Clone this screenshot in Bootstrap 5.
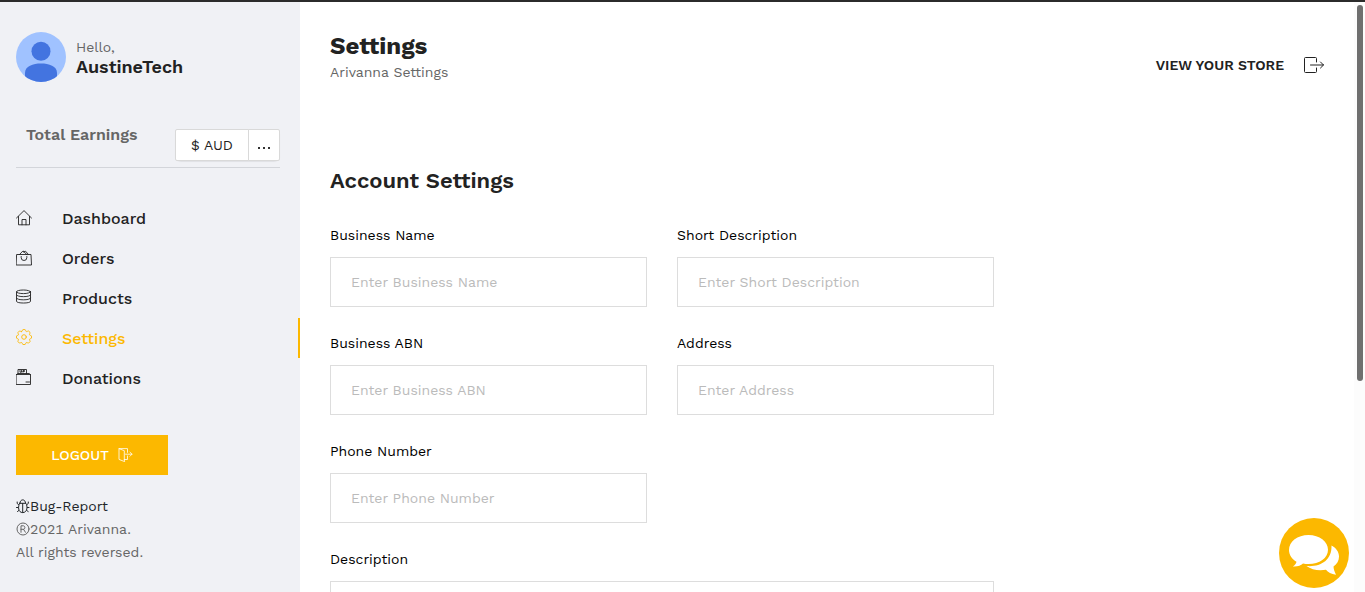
<!DOCTYPE html>
<html lang="en">
<head>
<meta charset="utf-8">
<meta name="viewport" content="width=device-width, initial-scale=1">
<title>Arivanna Settings</title>
<link href="https://cdn.jsdelivr.net/npm/bootstrap@5.3.0/dist/css/bootstrap.min.css" rel="stylesheet">
<style>
  :root { --brand: #fcb800; --ink: #222; --muted: #666; }
  body { font-family: "Work Sans", Inter, "Liberation Sans", sans-serif; font-size: 14px; line-height: 24px; color: var(--ink); background: #fff; }
  a { color: inherit; text-decoration: none; }
  svg { display: block; flex: none; }
  .line-icon { fill: none; stroke: currentColor; stroke-width: 1; stroke-linecap: round; stroke-linejoin: round; }
  .shell { border-top: 2px solid #2b2b2b; }
  .side { width: 300px; background: #f0f1f5; padding: 30px 0 0 16px; }
  .side-inner { margin-right: 20px; }
  .muted { color: var(--muted); }
  .who { gap: 10px; }
  .hello { line-height: 18px; }
  .user-name { font-size: 18px; line-height: 21px; font-weight: 600; }
  .earnings { margin-top: 41px; padding-bottom: 6px; border-bottom: 1px solid #d3d5da; }
  .earnings h2 { font-size: 16px; line-height: 24px; font-weight: 600; padding-left: 10px; }
  .money { box-shadow: 0 1px 1px #0001; margin-top: 6px; }
  .money .btn { --bs-btn-border-color: #d9d9d9; --bs-btn-bg: #fff; --bs-btn-border-radius: 2px; --bs-btn-color: #222; height: 32px; padding: 0; font-size: 14px; line-height: 30px; }
  .money .btn:first-child { width: 74px; }
  .money .btn:last-child { width: 32px; }
  .menu { margin-top: 30px; }
  .menu .nav-link { display: flex; align-items: center; gap: 30px; height: 40px; padding: 2px 0 0; font-size: 16px; font-weight: 500; color: var(--ink); border-right: 2px solid transparent; }
  .menu .nav-link.active { color: var(--brand); border-color: var(--brand); }
  .menu svg { margin-bottom: 2px; stroke-width: .9; }
  .btn-logout { --bs-btn-bg: var(--brand); --bs-btn-color: #fff; --bs-btn-border-color: var(--brand); --bs-btn-border-radius: 0; width: 152px; height: 40px; margin-top: 37px; font-size: 14px; font-weight: 500; gap: 9px; }
  .btn-logout svg { stroke-width: .8; }
  .legal { margin-top: 20px; line-height: 23px; font-variant-numeric: tabular-nums; }
  .legal svg { margin-bottom: 2px; }
  .main-pane { padding: 31px 30px 0; }
  h1 { font-size: 24px; line-height: 27px; font-weight: 700; margin: 0; }
  .store-link { font-size: 14px; font-weight: 600; gap: 20px; margin-top: 20px; }
  .account { max-width: 664px; margin-top: 82px; }
  .account h2 { font-size: 22px; line-height: 30px; font-weight: 600; margin-bottom: 27px; }
  .account .row { --bs-gutter-x: 30px; --bs-gutter-y: 24px; }
  .account .form-label { display: block; color: #000; margin-bottom: 10px; }
  .account .form-control { height: 50px; border: 1px solid #ddd; border-radius: 0; padding: 0 20px; font-size: 14px; background: #fff; }
  .account textarea.form-control { height: 120px; }
  .account .form-control::placeholder { color: #bbb; }
  .rail { width: 11px; background: #fcfcfc; padding: 3px 2px 0 3px; }
  .rail-thumb { height: 64%; background: #6f6f6f; border-radius: 3px; }
  .chat { right: 16px; bottom: 4px; width: 70px; height: 70px; background: var(--brand); }
</style>
</head>
<body>
<div class="shell d-flex vh-100 overflow-hidden">
  <aside class="side flex-shrink-0">
    <div class="side-inner">
      <div class="who d-flex align-items-center">
        <svg width="50" height="50" viewBox="0 0 50 50" aria-hidden="true"><defs><clipPath id="face"><circle cx="25" cy="25" r="25"/></clipPath></defs><g clip-path="url(#face)"><path fill="#a0c2ff" d="M0 0h50v50H0z"/><circle cx="25" cy="19.300" r="9.500" fill="#4374e0"/><path fill="#4374e0" d="M9 50V41C9 34 17 31.500 25 31.500S41 34 41 41v9z"/></g></svg>
        <div>
          <div class="hello muted">Hello,</div>
          <div class="user-name">AustineTech</div>
        </div>
      </div>
      <div class="earnings d-flex justify-content-between align-items-end">
        <h2 class="muted align-self-start mb-0">Total Earnings</h2>
        <div class="money btn-group">
          <button type="button" class="btn">$ AUD</button>
          <button type="button" class="btn" aria-label="More">
            <svg class="mx-auto mt-1" width="14" height="4" viewBox="0 0 14 4" fill="#333"><path d="M1 2h2v2H1zM6 2h2v2H6zM11 2h2v2h-2z"/></svg>
          </button>
        </div>
      </div>
    </div>
    <nav class="menu nav flex-column">
      <a class="nav-link" href="#"><svg class="line-icon" width="16" height="16" viewBox="0 0 16 16"><path d="M.5 8 8 .6 15.500 8M2.500 6.500v8.300h11V6.500M6 14.800V9.500h4v5.300"/></svg>Dashboard</a>
      <a class="nav-link" href="#"><svg class="line-icon" width="16" height="16" viewBox="0 0 16 16"><path d="M1 4.500h14l.5 10.500H.5zM3.500 4.500 7 .9l3.800 3.600M7.500 2l2-.8 3 3.300M5.200 6.500v1.200a2.800 2.800 0 0 0 5.600 0V6.500"/></svg>Orders</a>
      <a class="nav-link" href="#"><svg class="line-icon mb-1" width="16" height="16" viewBox="0 0 16 16"><ellipse cx="7.500" cy="2.800" rx="7" ry="1.800"/><path d="M.5 2.800v9.500c0 2.300 14 2.300 14 0V2.800M.5 6c0 2.300 14 2.300 14 0M.5 9.200c0 2.300 14 2.300 14 0"/></svg>Products</a>
      <a class="nav-link active" href="#" aria-current="page"><svg class="line-icon mb-1" width="16" height="16" viewBox="0 0 16 16"><circle cx="8" cy="8" r="2.300"/><path d="M5.700 2.600C6.400 2.300 6.300.6 7 .6h2c.7 0 .6 1.700 1.300 2s1.800-1 2.400-.5l1.300 1.300c.5.600-.8 1.700-.5 2.400s2 .6 2 1.300v1.900c0 .7-1.700.6-2 1.300s1 1.800.5 2.400l-1.300 1.300c-.6.500-1.700-.8-2.400-.5S9.700 15.500 9 15.500H7c-.7 0-.6-1.700-1.300-2s-1.800 1-2.400.5L2 12.700c-.5-.6.8-1.700.5-2.400S.5 9.700.5 9V7.100c0-.7 1.700-.6 2-1.300S1.500 4 2 3.400l1.300-1.300c.6-.5 1.700.8 2.400.5z"/></svg>Settings</a>
      <a class="nav-link" href="#"><svg class="line-icon mb-1" width="16" height="16" viewBox="0 0 16 16"><path d="M2 4.500v-4h8.500v4M.5 5.500h14v10H.5zM.5 5.500l1.500-1h11.200l1.300 1M10 13h3.500M4 1.500v1.700h1.500V1.500M7 3.200V1.500h1.500v1H7"/></svg>Donations</a>
    </nav>
    <button type="button" class="btn btn-logout d-flex align-items-center justify-content-center">LOGOUT
      <svg class="line-icon" width="15" height="14" viewBox="0 0 15 14"><path d="M6.300 11.500V2.700L1 .6v10.800l5.300 2.100zM1 .6h8.500v3.800M6.300 11.500h3.200V8M7.500 6.200H14M12 4.200l2 2-2 2"/></svg>
    </button>
    <div class="legal muted">
      <a href="#" class="d-flex align-items-center text-dark"><svg class="line-icon" width="14" height="16" viewBox="0 0 14 16"><path d="M3.700 5.300h6.200c2 3 1.500 9.300-3.200 9.300S1.700 8.300 3.700 5.300zM4 5C4 .7 9.500.7 9.500 5M6.700 5.500v9M2.500 6.500 1.200 5.500V4M2.200 9.500H.5M2.800 12.500l-1.300 1M11 6.500l1.300-1V4M11.200 9.500H13M10.700 12.500l1.500 1"/></svg>Bug-Report</a>
      <div class="d-flex align-items-center"><svg class="line-icon" width="14" height="14" viewBox="0 0 14 14"><circle cx="7" cy="7" r="6"/><path d="M5 10.300V3.800h2.500a1.800 1.800 0 0 1 0 3.500H5M7.500 7.300l2 3"/></svg>2021 Arivanna.</div>
      <div>All rights reversed.</div>
    </div>
  </aside>
  <main class="main-pane flex-grow-1 overflow-hidden">
    <header class="d-flex justify-content-between align-items-start">
      <div>
        <h1>Settings</h1>
        <div class="muted">Arivanna Settings</div>
      </div>
      <a href="#" class="store-link d-flex align-items-center">VIEW YOUR STORE
        <svg class="line-icon" width="20" height="16" viewBox="0 0 20 16"><path d="M12.500 5V1.500a1 1 0 0 0-1-1H1.500a1 1 0 0 0-1 1v13a1 1 0 0 0 1 1h10a1 1 0 0 0 1-1V11M6.500 8h13M16.500 5l3 3-3 3"/></svg>
      </a>
    </header>
    <form class="account">
      <h2>Account Settings</h2>
      <div class="row">
        <div class="col-6"><label class="form-label" for="bn">Business Name</label><input class="form-control" id="bn" type="text" placeholder="Enter Business Name"></div>
        <div class="col-6"><label class="form-label" for="sd">Short Description</label><input class="form-control" id="sd" type="text" placeholder="Enter Short Description"></div>
        <div class="col-6"><label class="form-label" for="abn">Business ABN</label><input class="form-control" id="abn" type="text" placeholder="Enter Business ABN"></div>
        <div class="col-6"><label class="form-label" for="ad">Address</label><input class="form-control" id="ad" type="text" placeholder="Enter Address"></div>
        <div class="col-6"><label class="form-label" for="ph">Phone Number</label><input class="form-control" id="ph" type="tel" placeholder="Enter Phone Number"></div>
        <div class="col-12"><label class="form-label" for="de">Description</label><textarea class="form-control" id="de"></textarea></div>
      </div>
    </form>
  </main>
  <div class="rail flex-shrink-0" aria-hidden="true"><div class="rail-thumb"></div></div>
</div>
<button type="button" class="chat btn rounded-circle border-0 p-0 position-fixed" aria-label="Chat">
  <svg width="70" height="70" viewBox="0 0 70 70" fill="#fff"><path d="M29.500 17C18.500 17 10 23.500 10 32c0 5 3 9 7.500 11.700-.3 1.800-1.500 3.500-3.700 4.700 4.500.4 8-1 10.200-3 1.800.4 3.600.6 5.500.6C40.500 46 49 40 49 31.700S40.500 17 29.500 17z"/><path d="M52.500 27.500c4.500 2.500 7.500 6.300 7.500 11 0 4.200-2 7.500-5.500 10 .1 2.700 1 5.300 2.500 8.200-4.800-.5-8-2.500-10-5-7.500 1.300-14.500 0-19.500-3.700 13 1.300 25.500-5 25-20.500z"/></svg>
</button>
<script src="https://cdn.jsdelivr.net/npm/bootstrap@5.3.0/dist/js/bootstrap.bundle.min.js"></script>
</body>
</html>
